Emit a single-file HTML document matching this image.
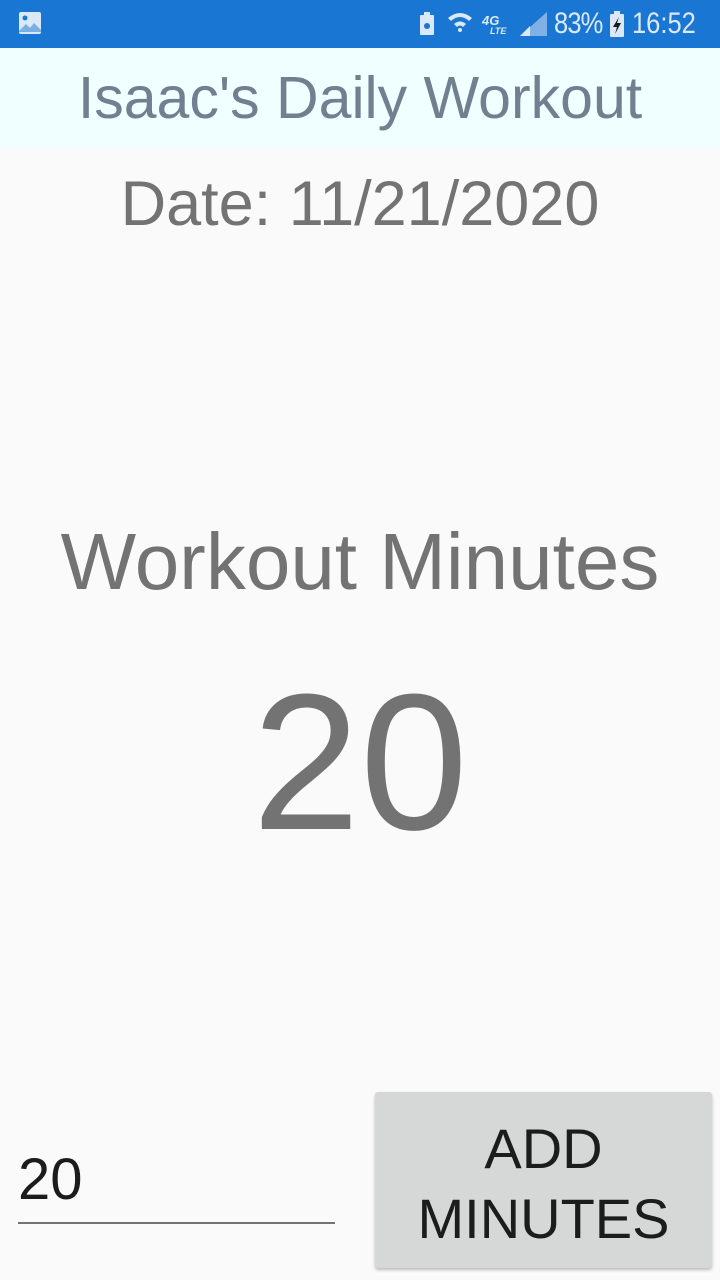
<!DOCTYPE html>
<html><head><meta charset="utf-8"><style>
*{margin:0;padding:0;box-sizing:border-box}
body{width:720px;height:1280px;background:#fafafa;font-family:"Liberation Sans",sans-serif;position:relative;overflow:hidden}
.sb{position:absolute;left:0;top:0;width:720px;height:48px;background:#1976d2;color:#dbe8f7}
.t{position:absolute;white-space:nowrap;line-height:1}
.c{left:0;width:720px;text-align:center}
</style></head><body>
<div class="sb">
 <svg style="position:absolute;left:18px;top:11px" width="24" height="24" viewBox="0 0 24 24"><rect x="1" y="1" width="22" height="22" rx="2" fill="#dbe8f7"/><circle cx="7" cy="7" r="2.5" fill="#1976d2"/><path d="M1 20 L8 13 L12 17 L16 12 L23 19 V21 H1Z" fill="#1976d2" opacity=".5"/></svg>
 <svg style="position:absolute;left:418px;top:12px" width="18" height="24"><rect x="2" y="3" width="14" height="20" rx="1" fill="#dbe8f7"/><rect x="6" y="0" width="6" height="4" fill="#dbe8f7"/><circle cx="9" cy="14" r="3" fill="#1976d2"/></svg>
 <svg style="position:absolute;left:446px;top:10px" width="34" height="28"><path d="M2 8 Q14 -2 26 8 L23 11 Q14 3 5 11Z M8 14 Q14 9 20 14 L17 17 Q14 14 11 17Z" fill="#dbe8f7"/><circle cx="14" cy="20" r="2" fill="#dbe8f7"/></svg>
 <div class="t" style="left:482px;top:14px;font-size:13px;font-weight:bold;font-style:italic">4G</div>
 <div class="t" style="left:490px;top:27px;font-size:9px;font-weight:bold;font-style:italic">LTE</div>
 <svg style="position:absolute;left:520px;top:12px" width="28" height="24"><path d="M27 0 V24 H0Z" fill="#7fb0e6"/><path d="M10 14 V24 H0Z" fill="#dbe8f7"/></svg>
 <div class="t" style="left:554px;top:9px;font-size:30px;letter-spacing:-1px;transform:scaleX(.85);transform-origin:left">83%</div>
 <svg style="position:absolute;left:609px;top:11px" width="16" height="26"><rect x="1" y="3" width="14" height="23" rx="1" fill="#dbe8f7"/><rect x="5" y="0" width="6" height="4" fill="#dbe8f7"/><path d="M10 6 L4 16 H8 L6 23 L12 12 H8Z" fill="#1a1a1a"/></svg>
 <div class="t" style="left:632px;top:9px;font-size:30px;transform:scaleX(.85);transform-origin:left">16:52</div>
</div>
<div style="position:absolute;left:0;top:48px;width:720px;height:100px;background:#f0ffff"></div>
<div class="t c" style="top:69px;font-size:59px;color:#708090">Isaac's Daily Workout</div>
<div class="t c" style="top:173px;font-size:63px;color:#737373">Date: 11/21/2020</div>
<div class="t c" style="top:522px;font-size:80px;color:#737373">Workout Minutes</div>
<div class="t c" style="top:666px;font-size:194px;color:#737373">20</div>
<div class="t" style="left:18px;top:1151px;font-size:58px;color:#1c1c1c">20</div>
<div style="position:absolute;left:18px;top:1222px;width:317px;height:2px;background:#737373"></div>
<div style="position:absolute;left:375px;top:1092px;width:337px;height:176px;background:#d6d7d7;border-radius:3px;box-shadow:0 2px 3px rgba(0,0,0,.25)"></div>
<div class="t" style="left:375px;width:337px;text-align:center;top:1114px;font-size:56px;color:#1c1c1c;line-height:70px">ADD<br>MINUTES</div>
</body></html>
